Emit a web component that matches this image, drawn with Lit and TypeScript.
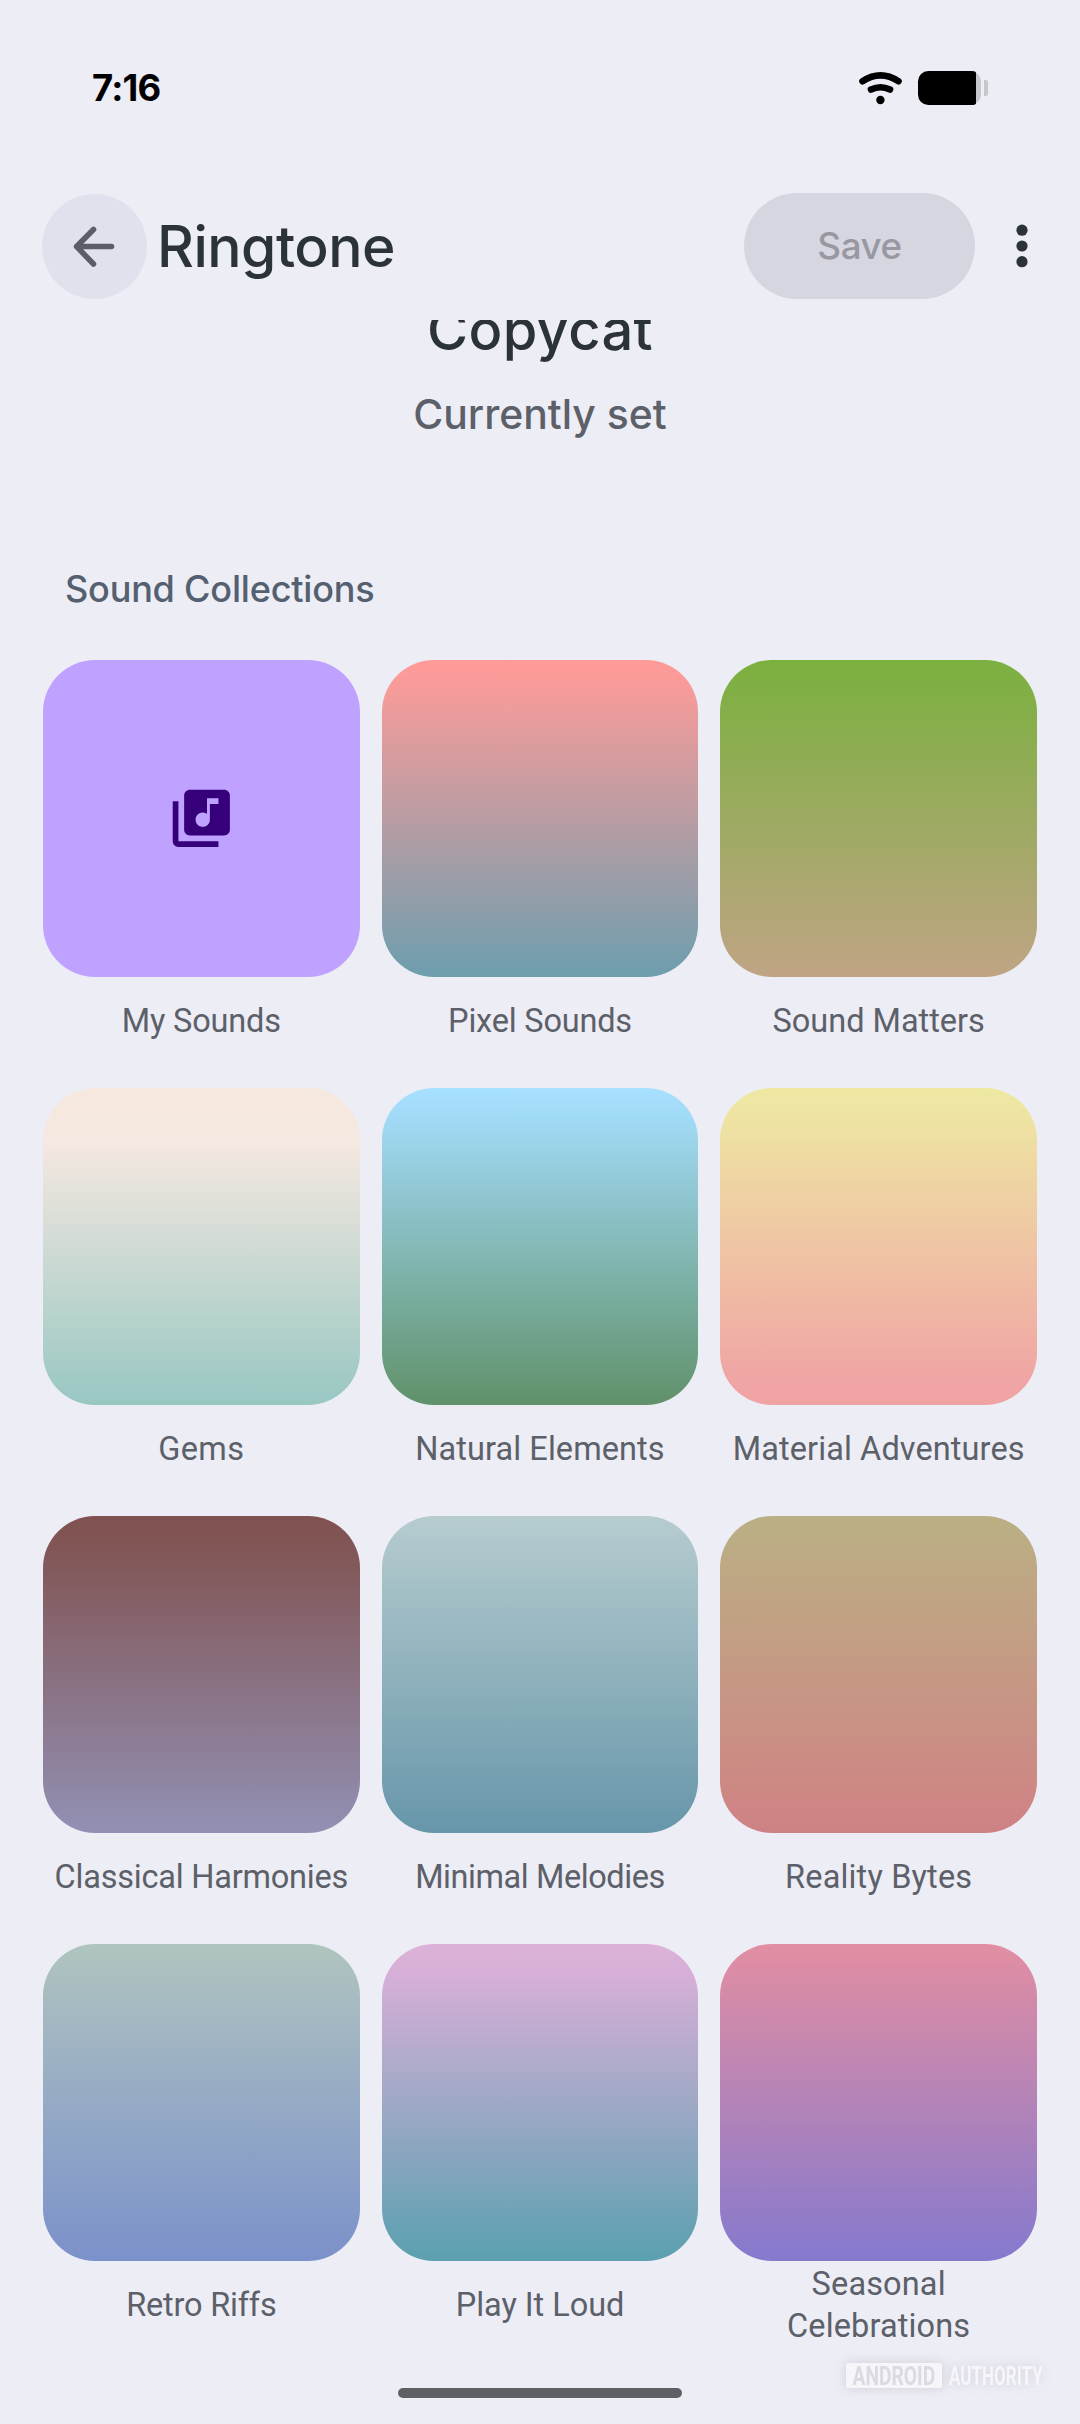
import { LitElement, html, css, svg } from "lit";
import { customElement, property } from "lit/decorators.js";

interface Collection {
  name: string;
  fill: string;
  tracking: number;
  icon?: boolean;
}

const COLLECTIONS: Collection[] = [
  { name: "My Sounds", fill: "#bfa2ff", tracking: -0.18, icon: true },
  { name: "Pixel Sounds", fill: "linear-gradient(#ff9a98, #fb9b99 6%, #6d9eae)", tracking: -0.2 },
  { name: "Sound Matters", fill: "linear-gradient(#7bb03f, #82af46 12%, #c0a485)", tracking: 0 },
  { name: "Gems", fill: "linear-gradient(#f6e8df, #f5e8e0 17%, #98c7c2)", tracking: 0.4 },
  { name: "Natural Elements", fill: "linear-gradient(#a8e0ff, #a2dbf8 8%, #60916a)", tracking: 0.07 },
  { name: "Material Adventures", fill: "linear-gradient(#eee8a3, #eee3a2 10%, #f0a5a4 92%, #f0a3a3)", tracking: 0.1 },
  { name: "Classical Harmonies", fill: "linear-gradient(#805150, #825757 12%, #9290b4)", tracking: -0.22 },
  { name: "Minimal Melodies", fill: "linear-gradient(#b6cccf, #6796aa)", tracking: -0.43 },
  { name: "Reality Bytes", fill: "linear-gradient(#bab084, #cf8484 94%, #cc8284)", tracking: 0.16 },
  { name: "Retro Riffs", fill: "linear-gradient(#b0c4bf, #7b91ca)", tracking: -0.19 },
  { name: "Play It Loud", fill: "linear-gradient(#ddb2d8, #d5afd7 10%, #5ba0b0)", tracking: -0.04 },
  { name: "Seasonal Celebrations", fill: "linear-gradient(#e18fa3, #db8ca5 8%, #8579ce)", tracking: 0.13 },
];

const libraryMusic = svg`<path d="M20 2H8c-1.1 0-2 .9-2 2v12c0 1.1.9 2 2 2h12c1.1 0 2-.9 2-2V4c0-1.1-.9-2-2-2zm-2 5h-3v5.5c0 1.38-1.12 2.5-2.5 2.5S10 13.88 10 12.5s1.12-2.5 2.5-2.5c.57 0 1.08.19 1.5.51V5h4v2zM4 6H2v14c0 1.1.9 2 2 2h14v-2H4V6z"/>`;

@customElement("sound-tile")
class SoundTile extends LitElement {
  @property({ attribute: false }) item!: Collection;

  static styles = css`
    :host {
      display: flex;
      flex-direction: column;
      min-width: 0;
    }
    .art {
      display: flex;
      align-items: center;
      justify-content: center;
      height: 316.6px;
      border-radius: 52px;
    }
    .glyph {
      width: 68.6px;
      height: 68.6px;
      fill: #36007a;
    }
    .label {
      display: flex;
      align-items: center;
      justify-content: center;
      height: 84px;
      margin-top: 2.4px;
      padding: 0 10px;
      font: 370 32.5px/42px Roboto, "Liberation Sans", sans-serif;
      color: #5c6069;
      text-align: center;
    }
  `;

  render() {
    const { name, fill, tracking, icon } = this.item;
    return html`
      <div class="art" style="background:${fill}">
        ${icon ? html`<svg class="glyph" viewBox="0 0 24 24">${libraryMusic}</svg>` : ""}
      </div>
      <div class="label" style="letter-spacing:${tracking}px">${name}</div>
    `;
  }
}

@customElement("app-root")
class AppRoot extends LitElement {
  static styles = css`
    :host {
      display: block;
    }
    .screen {
      position: relative;
      display: flex;
      flex-direction: column;
      box-sizing: border-box;
      width: 1080px;
      height: 2424px;
      overflow: hidden;
      background: #ededf6;
      font-family: Inter, "Liberation Sans", sans-serif;
    }
    .status {
      display: flex;
      align-items: center;
      justify-content: space-between;
      height: 34px;
      padding: 71px 92px 88px;
    }
    .time {
      font-size: 36.5px;
      font-weight: 700;
      line-height: 34px;
      letter-spacing: -0.8px;
      color: #000;
    }
    .signals {
      width: 130px;
      height: 34px;
    }
    .bar {
      display: flex;
      align-items: center;
      height: 106px;
      padding: 0 40px 0 42px;
    }
    .back {
      display: flex;
      width: 105px;
      height: 105px;
      border-radius: 50%;
      background: #dfe1ec;
    }
    .back svg {
      width: 105px;
      height: 105px;
    }
    .title {
      flex: 1;
      margin: 1px 0 0 10px;
      font-size: 57px;
      font-weight: 500;
      line-height: 70px;
      letter-spacing: -0.5px;
      color: #2c323a;
    }
    .save {
      display: flex;
      align-items: center;
      justify-content: center;
      box-sizing: border-box;
      width: 231px;
      height: 106px;
      padding-bottom: 2px;
      border-radius: 53px;
      background: #d6d6e0;
      font-size: 36.8px;
      font-weight: 500;
      letter-spacing: -0.46px;
      color: #9798a2;
    }
    .more {
      width: 12px;
      height: 44px;
      margin: 0 12px 0 41px;
      fill: #2c323a;
    }
    .body {
      display: flex;
      flex-direction: column;
      height: 2068px;
      margin-top: 21px;
      overflow: hidden;
    }
    .current {
      margin-top: -24.4px;
      text-align: center;
      font-size: 56px;
      font-weight: 500;
      line-height: 68px;
      letter-spacing: 0.4px;
      color: #2c323a;
    }
    .state {
      margin-top: 24.5px;
      text-align: center;
      font-size: 40.9px;
      font-weight: 500;
      line-height: 52px;
      color: #5c6069;
    }
    .heading {
      margin: 126.5px 0 0 65px;
      font-size: 36.1px;
      font-weight: 500;
      line-height: 44px;
      letter-spacing: -0.22px;
      color: #546070;
    }
    .grid {
      display: grid;
      grid-template-columns: repeat(3, 1fr);
      gap: 25px 22px;
      margin: 49.4px 43px 0;
    }
    .home {
      width: 284px;
      height: 10px;
      margin: 0 auto;
      border-radius: 5px;
      background: #5e6063;
    }
    .watermark {
      position: absolute;
      left: 836px;
      top: 2353px;
      width: 220px;
      height: 46px;
      filter: drop-shadow(0 0 6px rgba(70, 70, 90, 0.18));
      font: 700 26px Roboto, "Liberation Sans", sans-serif;
    }
    .mark-box,
    .mark-light {
      fill: #f5f5fa;
    }
    .mark-dark {
      fill: #dadbe2;
    }
  `;

  render() {
    return html`
      <div class="screen">
        <div class="status">
          <span class="time">7:16</span>
          <svg class="signals" viewBox="858 71 130 34">
            <g fill="none" stroke="#000" stroke-linecap="round" stroke-width="6.6">
              <path d="M862.5 81.3Q880.5 69.5 898.5 81.3" />
              <path d="M871 89.5Q880.5 84.9 890 89.5" />
            </g>
            <circle cx="880.4" cy="100" r="4.2" />
            <rect x="918" y="71" width="63" height="34" rx="10.5" fill="#c6c6cd" />
            <path d="M928.5 71H971.5Q976 71 976 73V103Q976 105 971.5 105H928.5A10.5 10.5 0 0 1 918 94.5V81.5A10.5 10.5 0 0 1 928.5 71Z" />
            <path d="M984 80h1.5q2.500 0 2.500 2.500v11q0 2.500-2.500 2.500H984z" fill="#c6c6cd" />
          </svg>
        </div>
        <div class="bar">
          <div class="back">
            <svg viewBox="42 193.5 105 105" fill="none" stroke="#5b5e68" stroke-width="5.6" stroke-linecap="round" stroke-linejoin="round">
              <path d="M93.500 229L76.600 246L93.500 263.500M77.500 246H111.500" />
            </svg>
          </div>
          <div class="title">Ringtone</div>
          <div class="save">Save</div>
          <svg class="more" viewBox="0 0 12 44">
            <circle cx="6" cy="6.2" r="5.6" />
            <circle cx="6" cy="22" r="5.6" />
            <circle cx="6" cy="37.7" r="5.6" />
          </svg>
        </div>
        <div class="body">
          <div class="current">Copycat</div>
          <div class="state">Currently set</div>
          <div class="heading">Sound Collections</div>
          <div class="grid">
            ${COLLECTIONS.map((c) => html`<sound-tile .item=${c}></sound-tile>`)}
          </div>
        </div>
        <div class="home"></div>
        <svg class="watermark" viewBox="836 2353 220 46">
          <rect class="mark-box" x="846" y="2363" width="96" height="25" rx="2" />
          <text class="mark-dark" transform="translate(852.5 2385) scale(0.74 1)">ANDROID</text>
          <text class="mark-light" transform="translate(949 2385) scale(0.655 1)">AUTHORITY</text>
        </svg>
      </div>
    `;
  }
}
